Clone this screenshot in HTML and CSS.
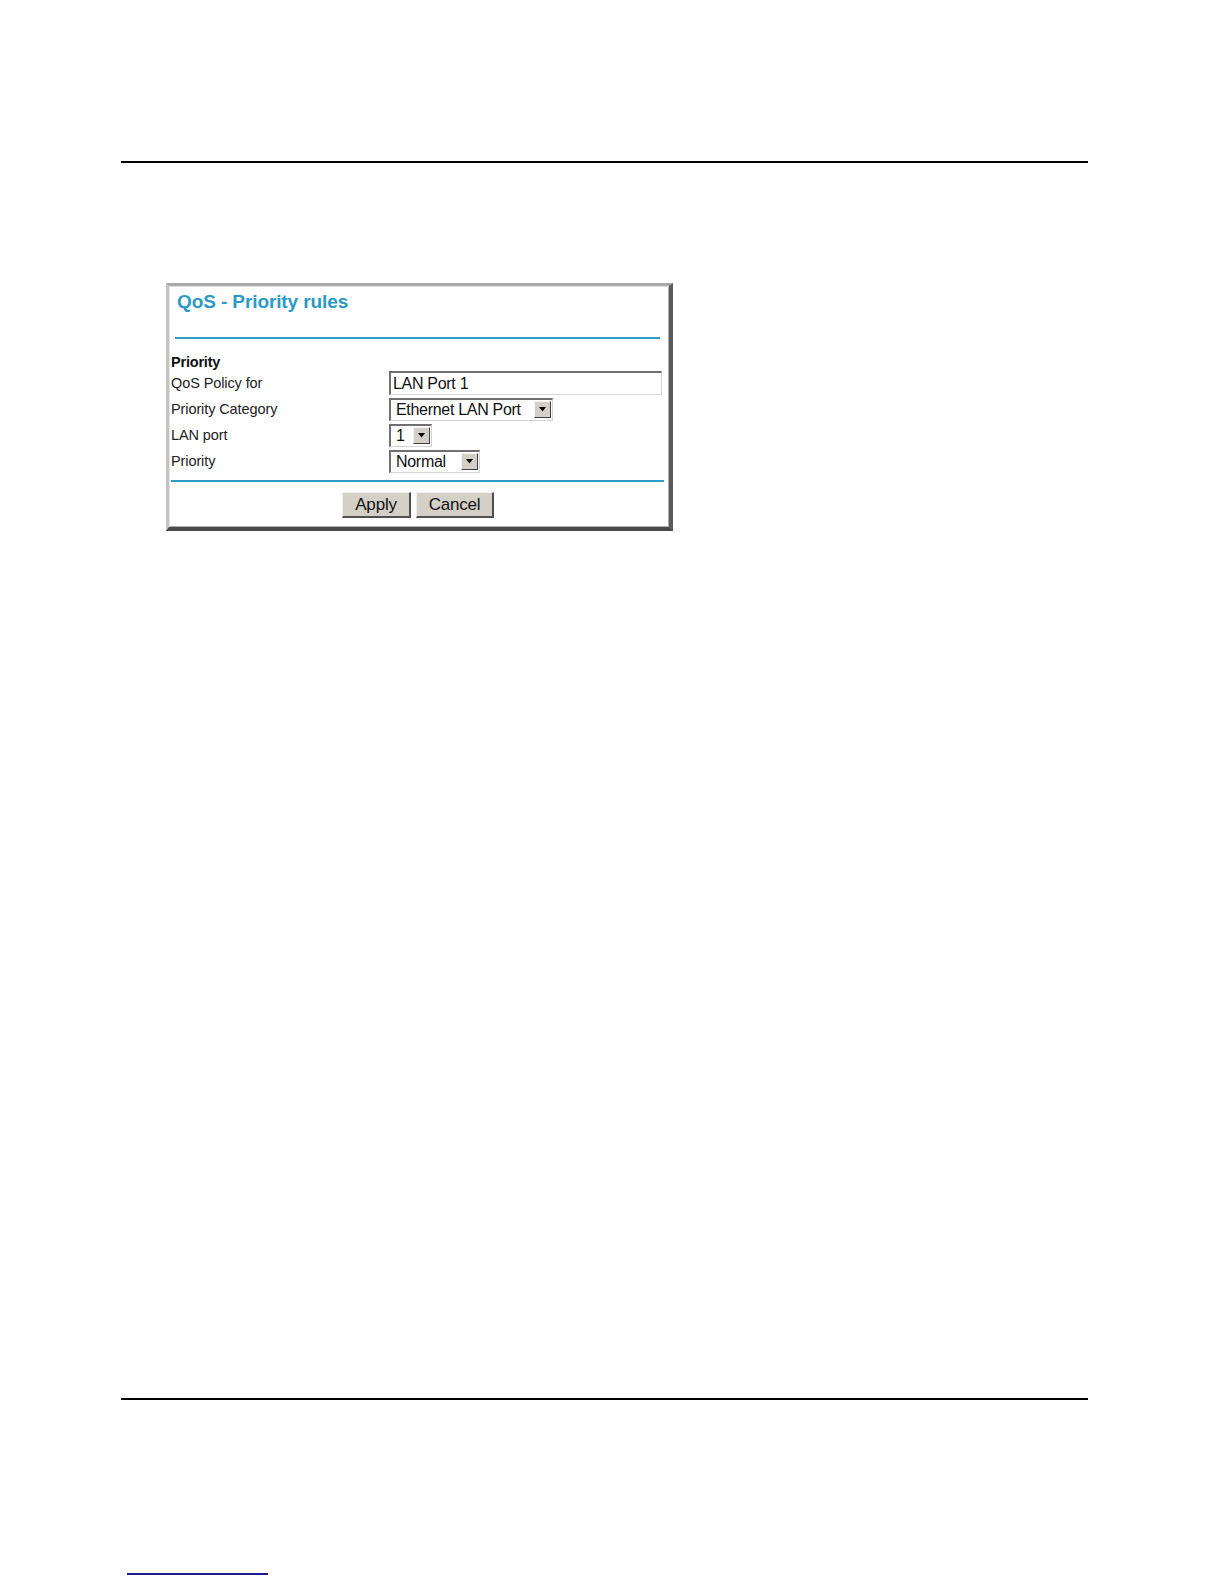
FILE: index.html
```html
<!DOCTYPE html>
<html>
<head>
<meta charset="utf-8">
<link rel="stylesheet" href="styles.css">
</head>
<body>
<div class="page">
  <div class="rule rule-top"></div>
  <div class="figure">
    <div class="frame">
      <div class="title">QoS - Priority rules</div>
      <div class="teal-line top-line"></div>
      <div class="section">Priority</div>
      <div class="form">
        <div class="label">QoS Policy for</div>
        <div class="field"><div class="textbox">LAN Port 1</div></div>
        <div class="label">Priority Category</div>
        <div class="field"><div class="select sel-cat"><span class="sel-text">Ethernet LAN Port</span><span class="arrow"><svg width="9" height="5" viewBox="0 0 9 5"><path d="M1 0H8L4.5 4.5Z" fill="#000"/></svg></span></div></div>
        <div class="label">LAN port</div>
        <div class="field"><div class="select sel-port"><span class="sel-text">1</span><span class="arrow"><svg width="9" height="5" viewBox="0 0 9 5"><path d="M1 0H8L4.5 4.5Z" fill="#000"/></svg></span></div></div>
        <div class="label">Priority</div>
        <div class="field"><div class="select sel-pri"><span class="sel-text">Normal</span><span class="arrow"><svg width="9" height="5" viewBox="0 0 9 5"><path d="M1 0H8L4.5 4.5Z" fill="#000"/></svg></span></div></div>
      </div>
      <div class="teal-line bottom-line"></div>
      <div class="buttons">
        <div class="btn btn-apply">Apply</div>
        <div class="btn btn-cancel">Cancel</div>
      </div>
    </div>
  </div>
  <div class="rule rule-bottom"></div>
  <div class="footer-link"></div>
</div>
</body>
</html>
```

FILE: styles.css
```css
html, body {
  margin: 0;
  padding: 0;
  background: #fff;
  font-family: "Liberation Sans", Arial, sans-serif;
}
.page {
  padding-top: 161px;
  height: 1584px;
  box-sizing: border-box;
}
.rule {
  margin-left: 121px;
  width: 967px;
  border-top: 2px solid #000;
}
.figure {
  margin: 120px 0 0 166px;
}
.frame {
  width: 507px;
  height: 248px;
  box-sizing: border-box;
  border-top: 3px solid #a9a9a9;
  border-left: 3px solid #c4c4c4;
  border-right: 4px solid #5a5a5a;
  border-bottom: 4px solid #4a4a4a;
  box-shadow: inset 1px 1px 0 #e2e2e2, inset -1px -1px 0 #b0b0b0;
  padding: 0 0 0 2px;
  background: #fff;
}
.title {
  margin: 5px 0 0 6px;
  font-size: 19px;
  line-height: 22px;
  font-weight: bold;
  color: #2b9ac6;
  letter-spacing: -0.1px;
}
.teal-line {
  height: 2px;
  background: #2f9fc4;
}
.top-line {
  margin: 24px 0 0 4px;
  width: 485px;
}
.section {
  margin-top: 14px;
  font-size: 14.5px;
  line-height: 18px;
  font-weight: bold;
  color: #111;
  letter-spacing: -0.2px;
}
.form {
  margin-top: -1px;
  display: grid;
  grid-template-columns: 218px 1fr;
  grid-auto-rows: 26px;
}
.label {
  display: flex;
  align-items: center;
  font-size: 14.5px;
  color: #222;
  letter-spacing: -0.1px;
}
.field {
  display: flex;
  align-items: center;
}
.textbox {
  width: 273px;
  height: 24px;
  box-sizing: border-box;
  border-top: 2px solid #6f6f6f;
  border-left: 2px solid #6f6f6f;
  border-right: 1px solid #d8d8d8;
  border-bottom: 1px solid #d8d8d8;
  padding-left: 2px;
  font-size: 16px;
  line-height: 21px;
  color: #111;
  letter-spacing: -0.3px;
}
.select {
  height: 23px;
  box-sizing: border-box;
  border-top: 2px solid #6f6f6f;
  border-left: 2px solid #6f6f6f;
  border-right: 1px solid #d4d4d4;
  border-bottom: 1px solid #d4d4d4;
  display: flex;
  align-items: center;
  justify-content: space-between;
  padding: 0 1px 0 5px;
  font-size: 16px;
  color: #111;
  letter-spacing: -0.3px;
}
.sel-cat { width: 164px; }
.sel-port { width: 43px; padding-left: 5px; }
.sel-pri { width: 91px; }
.arrow {
  width: 17px;
  height: 17px;
  box-sizing: border-box;
  background: #d4d0c8;
  border-top: 1px solid #f4f4f4;
  border-left: 1px solid #f4f4f4;
  border-right: 1px solid #404040;
  border-bottom: 1px solid #404040;
  display: flex;
  align-items: center;
  justify-content: center;
}
.bottom-line {
  margin-top: 6px;
  width: 493px;
}
.buttons {
  margin-top: 10px;
  display: flex;
  justify-content: center;
  gap: 5px;
  padding-right: 4px;
}
.btn {
  height: 26px;
  box-sizing: border-box;
  background: #d4d0c8;
  border-top: 1px solid #f0f0f0;
  border-left: 1px solid #f0f0f0;
  border-right: 2px solid #505050;
  border-bottom: 2px solid #505050;
  font-size: 17px;
  line-height: 23px;
  color: #111;
  text-align: center;
  letter-spacing: -0.2px;
}
.btn-apply { width: 69px; }
.btn-cancel { width: 78px; }
.rule-bottom {
  margin-top: 867px;
}
.footer-link {
  margin: 173px 0 0 127px;
  width: 141px;
  border-top: 2px solid #1c1c8c;
}
```
